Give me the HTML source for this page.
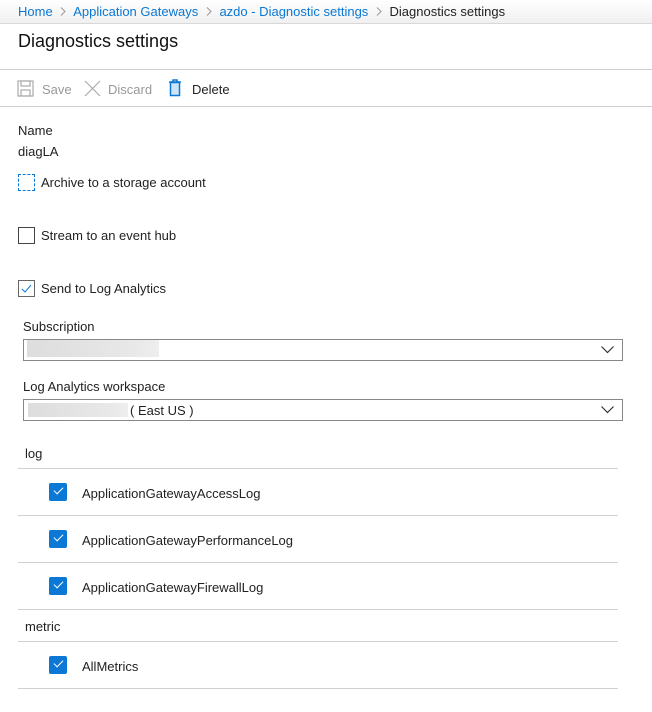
<!DOCTYPE html>
<html><head><style>
*{margin:0;padding:0;box-sizing:border-box}
body{width:652px;height:712px;background:#fff;font-family:"Segoe UI","Liberation Sans",sans-serif;font-size:13px;color:#222;position:relative;overflow:hidden}
.a{position:absolute;white-space:nowrap}
.bc{position:absolute;left:0;top:0;width:652px;height:24px;background:linear-gradient(#fff,#f0f0f0);border-bottom:1px solid #d8d8d8}
.hl{position:absolute;height:1px;background:#d0d0d0}
.cb{position:absolute;width:17px;height:17px;border:1px solid #444;background:#fff}
.bcb{position:absolute;width:18px;height:18px;background:#0a78d4;border-radius:2px}
.sel{position:absolute;left:23px;width:600px;height:22px;border:1px solid #888;background:#fff}
.blur{position:absolute;background:linear-gradient(90deg,#ddd,#e8e8e8 80%,#eee)}
.chev{display:inline-block;width:14px;text-align:center}
</style></head><body>
<div class="bc"></div>
<div class="a" style="left:18px;top:4px;color:#0a78d4">Home <svg class="chev" width="14" height="9"><path d="M5 0.5L9 4.5L5 8.5" fill="none" stroke="#999"/></svg> Application Gateways <svg class="chev" width="14" height="9"><path d="M5 0.5L9 4.5L5 8.5" fill="none" stroke="#999"/></svg> azdo - Diagnostic settings <svg class="chev" width="14" height="9"><path d="M5 0.5L9 4.5L5 8.5" fill="none" stroke="#999"/></svg> <span style="color:#222">Diagnostics settings</span></div>
<div class="a" style="left:18px;top:31px;font-size:18px;color:#111">Diagnostics settings</div>
<div class="hl" style="left:0;top:69px;width:652px"></div>
<svg class="a" style="left:17px;top:80px" width="17" height="17" viewBox="0 0 17 17" fill="none" stroke="#aaa" stroke-width="1.2"><rect x="1" y="1" width="15" height="15"/><rect x="4" y="1" width="9" height="5"/><rect x="4" y="10" width="9" height="6"/></svg>
<div class="a" style="left:42px;top:82px;color:#999">Save</div>
<svg class="a" style="left:84px;top:80px" width="17" height="17" stroke="#aaa" stroke-width="1.2"><path d="M1 1L16 16M16 1L1 16"/></svg>
<div class="a" style="left:108px;top:82px;color:#999">Discard</div>
<svg class="a" style="left:168px;top:79px" width="14" height="18" viewBox="0 0 14 18" fill="none" stroke="#0a78d4" stroke-width="1.5"><path d="M1 3H13M5 3V1H9V3"/><rect x="2.5" y="3.5" width="9" height="13" fill="#cde4f7"/></svg>
<div class="a" style="left:192px;top:82px">Delete</div>
<div class="hl" style="left:0;top:106px;width:652px"></div>
<div class="a" style="left:18px;top:123px">Name</div>
<div class="a" style="left:18px;top:144px">diagLA</div>
<div class="cb" style="left:18px;top:174px;border:1px dashed #0a78d4"></div>
<div class="a" style="left:41px;top:175px">Archive to a storage account</div>
<div class="cb" style="left:18px;top:227px"></div>
<div class="a" style="left:41px;top:228px">Stream to an event hub</div>
<div class="cb" style="left:18px;top:280px;border-color:#666"><svg width="15" height="15" style="position:absolute;left:0;top:0" fill="none" stroke="#0a78d4" stroke-width="1"><path d="M3 8L6 11L12 4"/></svg></div>
<div class="a" style="left:41px;top:281px">Send to Log Analytics</div>
<div class="a" style="left:23px;top:319px">Subscription</div>
<div class="sel" style="top:339px"><div class="blur" style="left:3px;top:0;width:132px;height:17px"></div>
<svg style="position:absolute;right:8px;top:6px" width="13" height="8" fill="none" stroke="#333" stroke-width="1.2"><path d="M0.5 0.5L6.5 6.5L12.5 0.5"/></svg></div>
<div class="a" style="left:23px;top:379px">Log Analytics workspace</div>
<div class="sel" style="top:399px"><div class="blur" style="left:4px;top:3px;width:100px;height:14px"></div>
<div class="a" style="left:106px;top:3px">( East US )</div>
<svg style="position:absolute;right:8px;top:6px" width="13" height="8" fill="none" stroke="#333" stroke-width="1.2"><path d="M0.5 0.5L6.5 6.5L12.5 0.5"/></svg></div>
<div class="a" style="left:25px;top:446px">log</div>
<div class="hl" style="left:18px;top:468px;width:600px"></div>
<div class="bcb" style="left:49px;top:483px"></div><div class="a" style="left:82px;top:486px">ApplicationGatewayAccessLog</div>
<div class="hl" style="left:18px;top:515px;width:600px"></div>
<div class="bcb" style="left:49px;top:530px"></div><div class="a" style="left:82px;top:533px">ApplicationGatewayPerformanceLog</div>
<div class="hl" style="left:18px;top:562px;width:600px"></div>
<div class="bcb" style="left:49px;top:577px"></div><div class="a" style="left:82px;top:580px">ApplicationGatewayFirewallLog</div>
<div class="hl" style="left:18px;top:609px;width:600px"></div>
<div class="a" style="left:25px;top:619px">metric</div>
<div class="hl" style="left:18px;top:641px;width:600px"></div>
<div class="bcb" style="left:49px;top:656px"></div><div class="a" style="left:82px;top:659px">AllMetrics</div>
<div class="hl" style="left:18px;top:688px;width:600px"></div>
<style>.bcb::after{content:"";position:absolute;left:5px;top:4px;width:8px;height:4px;border-left:1px solid #fff;border-bottom:1px solid #fff;transform:rotate(-45deg)}</style>
</body></html>
